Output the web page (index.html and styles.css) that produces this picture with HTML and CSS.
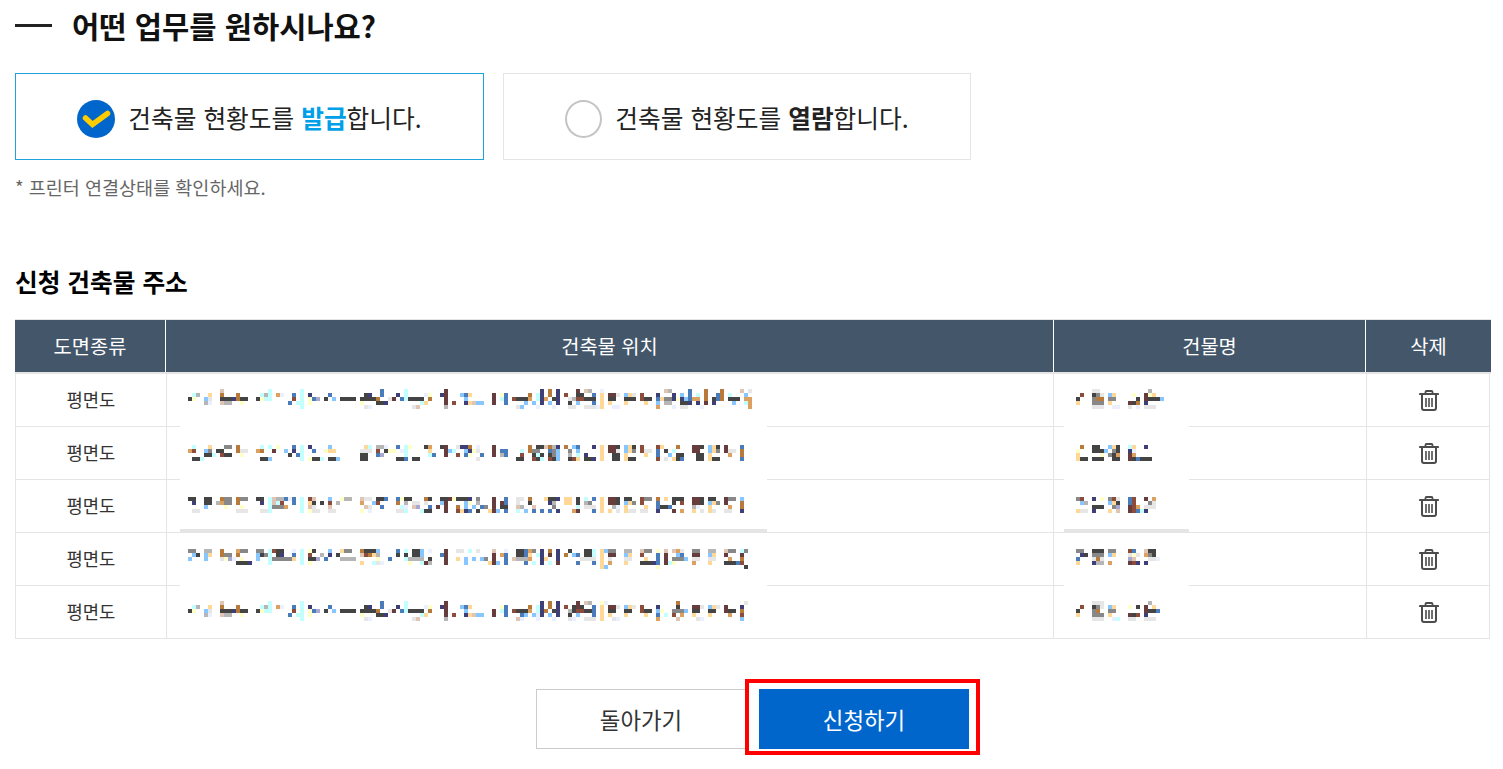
FILE: index.html
```html
<!DOCTYPE html>
<html lang="ko">
<head>
<meta charset="utf-8">
<title>건축물 현황도</title>
<link rel="stylesheet" href="styles.css">
</head>
<body>
<main class="page">
  <h1 class="title"><span class="title-dash"></span>어떤 업무를 원하시나요?</h1>
  <div class="options">
    <div class="option option-on">
      <svg class="check" viewBox="0 0 38 38" width="38" height="38"><circle cx="19" cy="19" r="19" fill="#0066cc"/><path d="M8.5 18 L15.5 24.5 L30.5 13.5" fill="none" stroke="#ffcc00" stroke-width="5.5" stroke-linecap="round" stroke-linejoin="miter"/></svg>
      <span>건축물 현황도를 <b class="accent">발급</b>합니다.</span>
    </div>
    <div class="option">
      <span class="radio"></span>
      <span>건축물 현황도를 <b>열람</b>합니다.</span>
    </div>
  </div>
  <p class="note">* 프린터 연결상태를 확인하세요.</p>
  <h2 class="subtitle">신청 건축물 주소</h2>
  <div class="table">
    <div class="thead">
      <div>도면종류</div><div>건축물 위치</div><div>건물명</div><div>삭제</div>
    </div>
    <div class="row">
      <div class="c">평면도</div>
      <div class="c loc"><div class="mask"><svg class="mosaic" data-m="a1"></svg></div></div>
      <div class="c name"><div class="mask"><svg class="mosaic" data-m="n1"></svg></div></div>
      <div class="c del"><svg class="trash" viewBox="0 0 20 21" width="20" height="21"><use href="#trash"/></svg></div>
    </div>
    <div class="row">
      <div class="c">평면도</div>
      <div class="c loc"><div class="mask"><svg class="mosaic" data-m="a2"></svg></div></div>
      <div class="c name"><div class="mask"><svg class="mosaic" data-m="n2"></svg></div></div>
      <div class="c del"><svg class="trash" viewBox="0 0 20 21" width="20" height="21"><use href="#trash"/></svg></div>
    </div>
    <div class="row">
      <div class="c">평면도</div>
      <div class="c loc"><div class="mask"><svg class="mosaic" data-m="a3"></svg><i class="band"></i></div></div>
      <div class="c name"><div class="mask"><svg class="mosaic" data-m="n3"></svg><i class="band"></i></div></div>
      <div class="c del"><svg class="trash" viewBox="0 0 20 21" width="20" height="21"><use href="#trash"/></svg></div>
    </div>
    <div class="row">
      <div class="c">평면도</div>
      <div class="c loc"><div class="mask"><svg class="mosaic" data-m="a4"></svg></div></div>
      <div class="c name"><div class="mask"><svg class="mosaic" data-m="n4"></svg></div></div>
      <div class="c del"><svg class="trash" viewBox="0 0 20 21" width="20" height="21"><use href="#trash"/></svg></div>
    </div>
    <div class="row">
      <div class="c">평면도</div>
      <div class="c loc"><div class="mask mask-last"><svg class="mosaic" data-m="a5"></svg></div></div>
      <div class="c name"><div class="mask mask-last"><svg class="mosaic" data-m="n5"></svg></div></div>
      <div class="c del"><svg class="trash" viewBox="0 0 20 21" width="20" height="21"><use href="#trash"/></svg></div>
    </div>
  </div>
  <div class="actions">
    <button class="btn btn-back" type="button">돌아가기</button>
    <div class="go-wrap">
      <button class="btn btn-go" type="button">신청하기</button>
      <span class="highlight"></span>
    </div>
  </div>
</main>
<svg class="defs" width="0" height="0"><defs><symbol id="trash" viewBox="0 0 20 21">
  <path d="M6.5 3.5 V2 Q6.5 1 7.5 1 H12.5 Q13.5 1 13.5 2 V3.5" fill="none" stroke="#4c4c4c" stroke-width="1.8"/>
  <path d="M1 4 H19" stroke="#4c4c4c" stroke-width="2.2" stroke-linecap="round"/>
  <path d="M3 5 V18 Q3 20 5 20 H15 Q17 20 17 18 V5" fill="none" stroke="#4c4c4c" stroke-width="2"/>
  <path d="M7 8 V17 M10 8 V17 M13 8 V17" stroke="#4c4c4c" stroke-width="1.6"/>
</symbol></defs></svg>
<script src="mosaic.js"></script>
</body>
</html>
```
FILE: styles.css
```css
* { box-sizing: border-box; }
html, body { margin: 0; background: #fff; }
body { font-family: "Noto Sans CJK KR", "Noto Sans", sans-serif; color: #222; }
.page { width: 1476px; margin-left: 15px; padding-bottom: 20px; }

.title { display: flex; align-items: center; height: 51px; margin: 0 0 22px; font-size: 29.6px; font-weight: 700; color: #111; line-height: 51px; }
.title-dash { width: 37px; height: 3px; background: #222; margin-right: 20px; }

.options { display: flex; gap: 19px; }
.option { display: flex; align-items: center; justify-content: center; gap: 13px; width: 468px; height: 87px; border: 1px solid #e5e5e5; font-size: 24.7px; color: #222; }
.option-on { width: 469px; border-color: #1fa3dc; }
.accent { color: #00a0e9; }
.check { display: block; flex: none; margin-top: 4px; }
.radio { width: 37px; height: 38px; border: 2px solid #c4c4c4; border-radius: 50%; flex: none; margin-top: 4px; }

.note { margin: 14px 0 0; font-size: 18.5px; line-height: 26px; color: #666; }
.subtitle { margin: 66px 0 23px; font-size: 24.7px; line-height: 30px; font-weight: 700; color: #000; }

.table { border-top: 1px solid #e5e5e5; }
.thead { display: grid; grid-template-columns: 150px 888px 312px 126px; height: 54px; background: #44566a; border-bottom: 2px solid #e5e5e5; color: #fff; font-size: 19.8px; }
.thead > div { display: flex; align-items: center; justify-content: center; padding-bottom: 1px; }
.thead > div + div { border-left: 1px solid #fff; }
.row { display: grid; grid-template-columns: 150px 887px 313px 123px; width: 1475px; height: 53px; border: 1px solid #e5e5e5; border-width: 0 1px 1px; }
.c { display: flex; align-items: center; justify-content: center; position: relative; padding-bottom: 2px; font-size: 17.7px; color: #333; }
.c + .c { border-left: 1px solid #e5e5e5; }

.mask { position: absolute; top: 0; bottom: -1px; background: #fff; }
.mask-last { bottom: 0; }
.loc .mask { left: 13px; width: 587px; }
.name .mask { left: 10px; width: 125px; }
.mosaic { position: absolute; display: block; overflow: visible; }
.band { position: absolute; left: 0; right: 0; bottom: 0; height: 4px; background: #e5e5e5; }

.del { padding-left: 2px; padding-bottom: 0; }
.trash { display: block; }
.defs { position: absolute; }

.actions { display: flex; justify-content: center; gap: 13px; margin-top: 50px; padding-right: 1px; }
.btn { display: block; width: 210px; height: 60px; padding: 0; font: inherit; font-size: 22.4px; border: 1px solid #ccc; background: #fff; color: #333; }
.go-wrap { position: relative; }
.btn-go { border: 0; background: #0066cc; color: #fff; }
.highlight { position: absolute; left: -14px; top: -10px; width: 235px; height: 76px; border: 4px solid #f00; }
```
FILE: mosaic.js
```js
var PAL = { k:'#444444', g:'#888888', l:'#e6e6e6', m:'#b6b6b6', b:'#4a7cbc', B:'#3f3f78', s:'#88c6ff', c:'#c4ffff', o:'#b87a3a', p:'#ffd898', r:'#663c3c', t:'#dca060', y:'#ffffc8', w:'#eaf0ff', R:'#8c4c3c', e:'#e0c4b4', v:'#a8a8d0' };

var A1L = [
 '8e 20c 28c 48b 54c 64r 88B 90o 92B 97r 99em 103w 119em 125b 129o 133o 138e 140l',
 '1cm 5p 8o 12o 18cmc 22tw 26b 28c 30B 35b 44kB 48b 52B 54c 59wy 63Br 68sbp 76r 78yb 85o 87cB 90o 92B 94R 97kk 101b 103p 105rrl 109spl 113R 117B 121B 123s 125b 127c 129o 132b 133o 135c 139s',
 '0ky 4sl 8kkkBo 13kk 17ky 19cc 26R 28c 30y 31bv 34k 36s 38kkkk 43kkkko 50lr 53bc 55kkkk 60o 64r 69s 76r 78cb 81Rkkkt 87cBt 91kB 95lmRR 99kkk 103p 105kk 109kkk 113Rkk 117bpggByBsbtt 129o 131kbo 135kkk 139tt',
 '4mw 8emm 13y 25b 27cc 30y 43y 47kkB 58cp 64r 66R 69Bpes 73s 76r 79b 84s 86s 88B 90s 92B 95k 97s 101b 103p 105p 109p 114p 117s 119mm 123kkB 127B 129r 131B 136s 139ct',
 '28c 44lw 56le 64m 82ls 87w 91w 95ll 99lll 102w 103p 106ww 117t 121w 123ll 128w 140t'
];
var A5R = [
 '88B 90o 92B 97r 99em 103yw 122o 139l',
 '78yb 85o 87cB 90o 92B 94R 96krk 101b 103p 105rrl 109spl 113R 117B 122k 126rrl 130spl 134r 138B',
 '76r 78cb 81Rkkkt 87cBo 91kB 95mkRRkkb 103p 105kk 109kk 113Rkk 117sy 121gggs 126kk 130kk 134rkk 138o',
 '76r 79b 83b 84s 86s 87wB 90s 92B 95k 97s 101b 103p 105p 109p 114p 117b 119c 121R 123t 126p 130p 135t 138R',
 '82ew 87w 91w 95lw 99ll 101l 103p 106lw 117t 122e 127lw 138s'
];
function cut(lines, from, to) {
  return lines.map(function (s) {
    return s.split(' ').filter(function (t) { var n = parseInt(t, 10); return n >= from && n < to; }).join(' ');
  });
}
var DATA = {
 a1: { cols: 141, lines: A1L },
 a2: { cols: 141, lines: [
  '1c 5p 9gg 12o 18c 20c 22y 26b 28c 30B 35s 44pc 47mmw 52b 54cy 59kt 63kr 67l 68B 69Bo 72w 76r 85o 87kk 89eomB 94o 96sb 101B 103p 105rrk 109spk 113R 117Rp 122o 126rrk 130spk 134r 138b',
  '0tR 4sg 7kk 12oll 17to 21r 24s 26B 28c 31b 34ypp 43lll 47R 49kyy 53wc 60p 64rsc 69sB 71y 72l 76r 78bb 83c 85og 87g 90bgs 95g 97s 103p 105rrl 109spg 113Rll 117b 119k 121c 126rr 130spg 134rll 138o',
  '4kkc 8Rkk 13y 25k 27bc 43kk 47bv 54c 60cb 64r 67R 69by 73b 76r 78mb 83R 86kck 90kgs 95m 97c 99B 103p 106kk 109p 114p 117b 120s 122kk 127kk 130p 135t 138o',
  '1kkc 18kks 28c 30ykkc 35kks 43kk 52kkb 56kk 72l 82kk 86Rkc 90Rks 95kRp 99kkB 103p 106kk 109pkk 117R 119l 121pkb 127kk 130pkk 138b'
 ]},
 a3: { cols: 141, lines: [
  '0kk 4kk 8ogg 12ogg 17kk 20cemmbwb 28c 30Re 35s 38ymm 43ell 47kkb 52by 54kk 59ok 63kkr 66ykko 69kB 72g 76r 79b 82ll 85o 89pkkB 94pp 97k 99c 101b 103p 105rrk 109kk 113Rgg 117o 119p 121kkk 126rrk 130kk 134rgg 138s',
  '1B 4kk 7mtgg 12o 18B 20cecR 26b 28c 30pk 33k 35R 37m 43t 46sR 52o 54m 56ll 59l 63sr 69sy 72m 76r 78rb 82l 85k 90Bm 94pp 97k 99mg 103p 105rrk 109spg 113R 117b 121k 123R 126rrk 130spg 134r 138o',
  '4s 9y 13y 20cgggt 28c 30el 35e 44el 48b 53c 54w 56ev 60b 62r 64r 67o 69s 71s 73bg 76r 78kk 82em 86e 91g 97c 99lll 103p 106mw 109p 114p 117bkkb 126mw 130p 135t 138o',
  '1ll 12lll 18ll 20c 28c 30yll 35ll 43y 45w 52ll 54c 58c 59kk 64r 67R 69tb 68pB 72k 75prs 79b 82c 84s 86b 88b 90b 92B 96tr 101b 103p 105p 107l 109pll 113ll 117B 121r 123t 126p 128l 130pl 134ll 138B'
 ]},
 a4: { cols: 141, lines: [
  '0gg 4mm 8o 12tgg 17gg 20c 21Rkk 26w 28c 30yk 35s 38pgg 43okkk 47s 52b 54c 56kks 60w 64r 67ll 70c 72l 76e 79w 82kkbtg 88B 90o 92B 95k 99kkc 103psgg 109mm 113egg 117y 119e 121etl 126gg 130mm 134egg 138cg',
  '1sk 4sp 8ogg 12o 17sk 19gc 22kB 26b 28c 30R 33m 35B 37k 43eRopm 52k 54k 56kks 63br 76r 78tb 82kk 84bp 87cB 90r 92B 94o 96sb 99kk 101c 103p 105rr 109sp 113R 117b 119r 122sb 126rr 130sp 134r 138r',
  '0s 4s 8lyvw 13y 17s 20c 21gggggp 28c 30kkv 34b 38mmmm 47y 50b 54c 55mmmm 60k 64r 67p 69s 71s 73sg 76r 79b 81emmmt 88Bp 92B 98llll 103p 105l 109ll 114p 117b 119r 121gggs 126ll 130ll 135t 138o',
  '12kkkB 20c 28c 30y 43p 46c 47lw 55y 58cr 60m 64r 69s 75prs 79b 84b 86c 88B 90c 92r 97b 101b 103p 105t 109p 113kkkBb 119rc 121y 126t 130p 134kkkbR',
  '103ps 117y 139k'
 ]},
 a5: { cols: 141, lines: (function () {
  var l = cut(A1L, 0, 76), r = A5R;
  return l.map(function (s, i) { return s + ' ' + r[i]; });
 })() },
 n1: { cols: 21, lines: [
  '4ll 18m',
  '1R 4kgl 8sp 14y 17ryp',
  '0k 4goo 8gg 15k 17rkkks',
  '0p 4ggg 8p 13rko 17B',
  '4lll 9ww 13l 15w 17lll'
 ]},
 n2: { cols: 21, lines: [
  '1o 4kk 8spk 13cp 17B',
  '0y 4kkks 9gk 13Bw',
  '0p 6y 8gkt 13rt',
  '0pkk 4kkk 9kk 13rkbkkk'
 ]},
 n3: { cols: 21, lines: [
  '0gR 4B 6y 8gRl 13bR 17r 19t',
  '1sm 8spk 13bR 18gl',
  '4kkk 9gv 13rRt 17lll',
  '0pll 4B 8p 10e 13rRbcB'
 ]},
 n4: { cols: 21, lines: [
  '0gg 4kkk 8gg 13Rb 17ekk',
  '1Bk 4ggg 8sp 13lyl 17tgk',
  '0b 4lol 13ve 18llw',
  '0p 4Bmm 8t 13rRB 17B'
 ]},
 n5: { cols: 21, lines: [
  '4lll 18m',
  '1R 4kgl 8sp 13y 15k 17r 19p',
  '0k 4go 8gg 17rkkb',
  '0p 4ggg 8p 13rkR 17B',
  '4lll 9wc 13ll 17lll'
 ]}
};
var POS = {
 a1: [8, 15], a2: [8, 18], a3: [8, 17], a4: [8, 16], a5: [8, 15],
 n1: [12, 15], n2: [12, 18], n3: [12, 17], n4: [12, 16], n5: [12, 15]
};
var NS = 'http://www.w3.org/2000/svg';
document.querySelectorAll('.mosaic').forEach(function (svg) {
  var key = svg.getAttribute('data-m'), d = DATA[key];
  svg.setAttribute('width', d.cols * 4);
  svg.setAttribute('height', d.lines.length * 4);
  svg.style.left = POS[key][0] + 'px';
  svg.style.top = POS[key][1] + 'px';
  d.lines.forEach(function (line, y) {
    line.split(' ').forEach(function (tok) {
      var m = /^(\d*)([A-Za-z]+)$/.exec(tok);
      if (!m) return;
      var x = m[1] === '' ? 0 : parseInt(m[1], 10);
      m[2].split('').forEach(function (ch, i) {
        if (!PAL[ch]) return;
        var r = document.createElementNS(NS, 'rect');
        r.setAttribute('x', (x + i) * 4);
        r.setAttribute('y', y * 4);
        r.setAttribute('width', 4);
        r.setAttribute('height', 4);
        r.setAttribute('fill', PAL[ch]);
        svg.appendChild(r);
      });
    });
  });
});
```
